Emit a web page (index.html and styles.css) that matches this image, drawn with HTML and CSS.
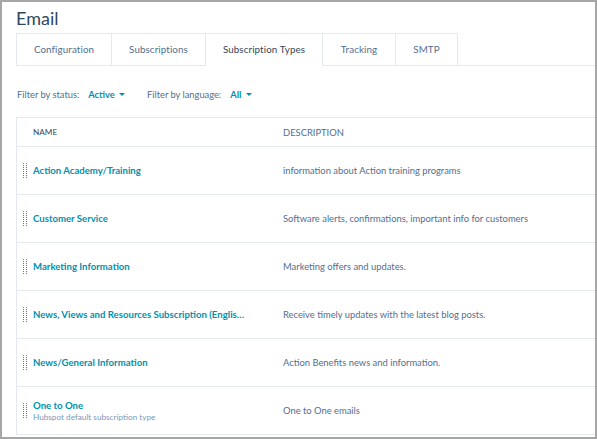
FILE: index.html
```html
<!DOCTYPE html>
<html lang="en">
<head>
	<meta charset="UTF-8">
	<title>Email</title>
	<link rel="stylesheet" href="styles.css">
</head>
<body>
	<div class="frame">
		<h1 class="title">Email</h1>
		<ul class="tabs">
			<li class="tab">Configuration</li>
			<li class="tab">Subscriptions</li>
			<li class="tab active">Subscription Types</li>
			<li class="tab">Tracking</li>
			<li class="tab">SMTP</li>
			<li class="tab-rest"></li>
		</ul>
		<div class="filters">
			<span class="label">Filter by status:</span>
			<span class="pick">Active <i class="caret"></i></span>
			<span class="label">Filter by language:</span>
			<span class="pick">All <i class="caret"></i></span>
		</div>
		<div class="table">
			<div class="row head">
				<div class="cell name">NAME</div>
				<div class="cell desc">DESCRIPTION</div>
			</div>
			<div class="row">
				<div class="cell name"><span class="grip"></span><a href="#">Action Academy/Training</a></div>
				<div class="cell desc">information about Action training programs</div>
			</div>
			<div class="row">
				<div class="cell name"><span class="grip"></span><a href="#">Customer Service</a></div>
				<div class="cell desc">Software alerts, confirmations, important info for customers</div>
			</div>
			<div class="row">
				<div class="cell name"><span class="grip"></span><a href="#">Marketing Information</a></div>
				<div class="cell desc">Marketing offers and updates.</div>
			</div>
			<div class="row">
				<div class="cell name"><span class="grip"></span><a href="#" title="News, Views and Resources Subscription (English)">News, Views and Resources Subscription (Englis…</a></div>
				<div class="cell desc">Receive timely updates with the latest blog posts.</div>
			</div>
			<div class="row">
				<div class="cell name"><span class="grip"></span><a href="#">News/General Information</a></div>
				<div class="cell desc">Action Benefits news and information.</div>
			</div>
			<div class="row">
				<div class="cell name"><span class="grip"></span><div class="stack"><a href="#">One to One</a><small>Hubspot default subscription type</small></div></div>
				<div class="cell desc">One to One emails</div>
			</div>
		</div>
	</div>
</body>
</html>
```
FILE: styles.css
```css
*{
	box-sizing: border-box;
}
body{
	margin: 0;
	font-family: Lato, "Open Sans", sans-serif;
	color: #33475b;
}
.frame{
	width: 597px;
	height: 439px;
	border: 2px solid #a6a6a6;
	padding: 0 0 0 14px;
	overflow: hidden;
	background: #fff;
}
.title{
	margin: 0;
	padding-top: 4px;
	height: 31px;
	font-size: 18px;
	line-height: 24px;
	font-weight: 400;
	color: #33475b;
}
.tabs{
	display: flex;
	margin: 0;
	padding: 0;
	list-style: none;
	height: 33px;
}
.tab{
	height: 33px;
	line-height: 31px;
	border: 1px solid #e3e8f1;
	border-left: none;
	font-size: 9.8px;
	letter-spacing: 0.1px;
	color: #516f90;
	text-align: center;
}
.tab:first-child{
	border-left: 1px solid #e3e8f1;
	width: 96px;
}
.tab:nth-child(2){ width: 94px; }
.tab:nth-child(3){ width: 117px; }
.tab:nth-child(4){ width: 73px; }
.tab:nth-child(5){ width: 62px; }
.tab.active{
	border-bottom-color: #fff;
	color: #33475b;
}
.tab-rest{
	flex: 1;
	border-bottom: 1px solid #e3e8f1;
}
.filters{
	display: flex;
	align-items: center;
	height: 51px;
	padding: 6px 0 0 1px;
	font-size: 9.3px;
	color: #516f90;
}
.filters .label{
	margin-right: 9px;
}
.pick{
	color: #0091ae;
	font-weight: 700;
	margin-right: 22px;
}
.caret{
	display: inline-block;
	width: 0;
	height: 0;
	border-left: 3px solid transparent;
	border-right: 3px solid transparent;
	border-top: 3.5px solid #0091ae;
	vertical-align: 2px;
	margin-left: 2px;
}
.table{
	width: 600px;
	border: 1px solid #e3e8f1;
}
.row{
	display: flex;
	align-items: center;
	height: 48px;
	border-top: 1px solid #e3e8f1;
}
.row.head{
	height: 28px;
	border-top: none;
}
.cell.name{
	width: 266px;
	padding-left: 6px;
	display: flex;
	align-items: center;
	white-space: nowrap;
}
.head .cell.name{
	padding-left: 16px;
}
.head .cell{
	font-size: 8.2px;
	color: #33475b;
}
.cell.name a{
	color: #0091ae;
	font-weight: 700;
	font-size: 9.6px;
	text-decoration: none;
}
.cell.desc{
	font-size: 9.4px;
	color: #516f90;
}
.grip{
	width: 4px;
	height: 15px;
	margin-right: 6px;
	border-left: 1px dotted #5b7795;
	border-right: 1px dotted #5b7795;
	flex-shrink: 0;
}
.stack{
	display: flex;
	flex-direction: column;
}
.stack small{
	font-size: 8.2px;
	color: #7c98b6;
	margin-top: 1px;
}
```
